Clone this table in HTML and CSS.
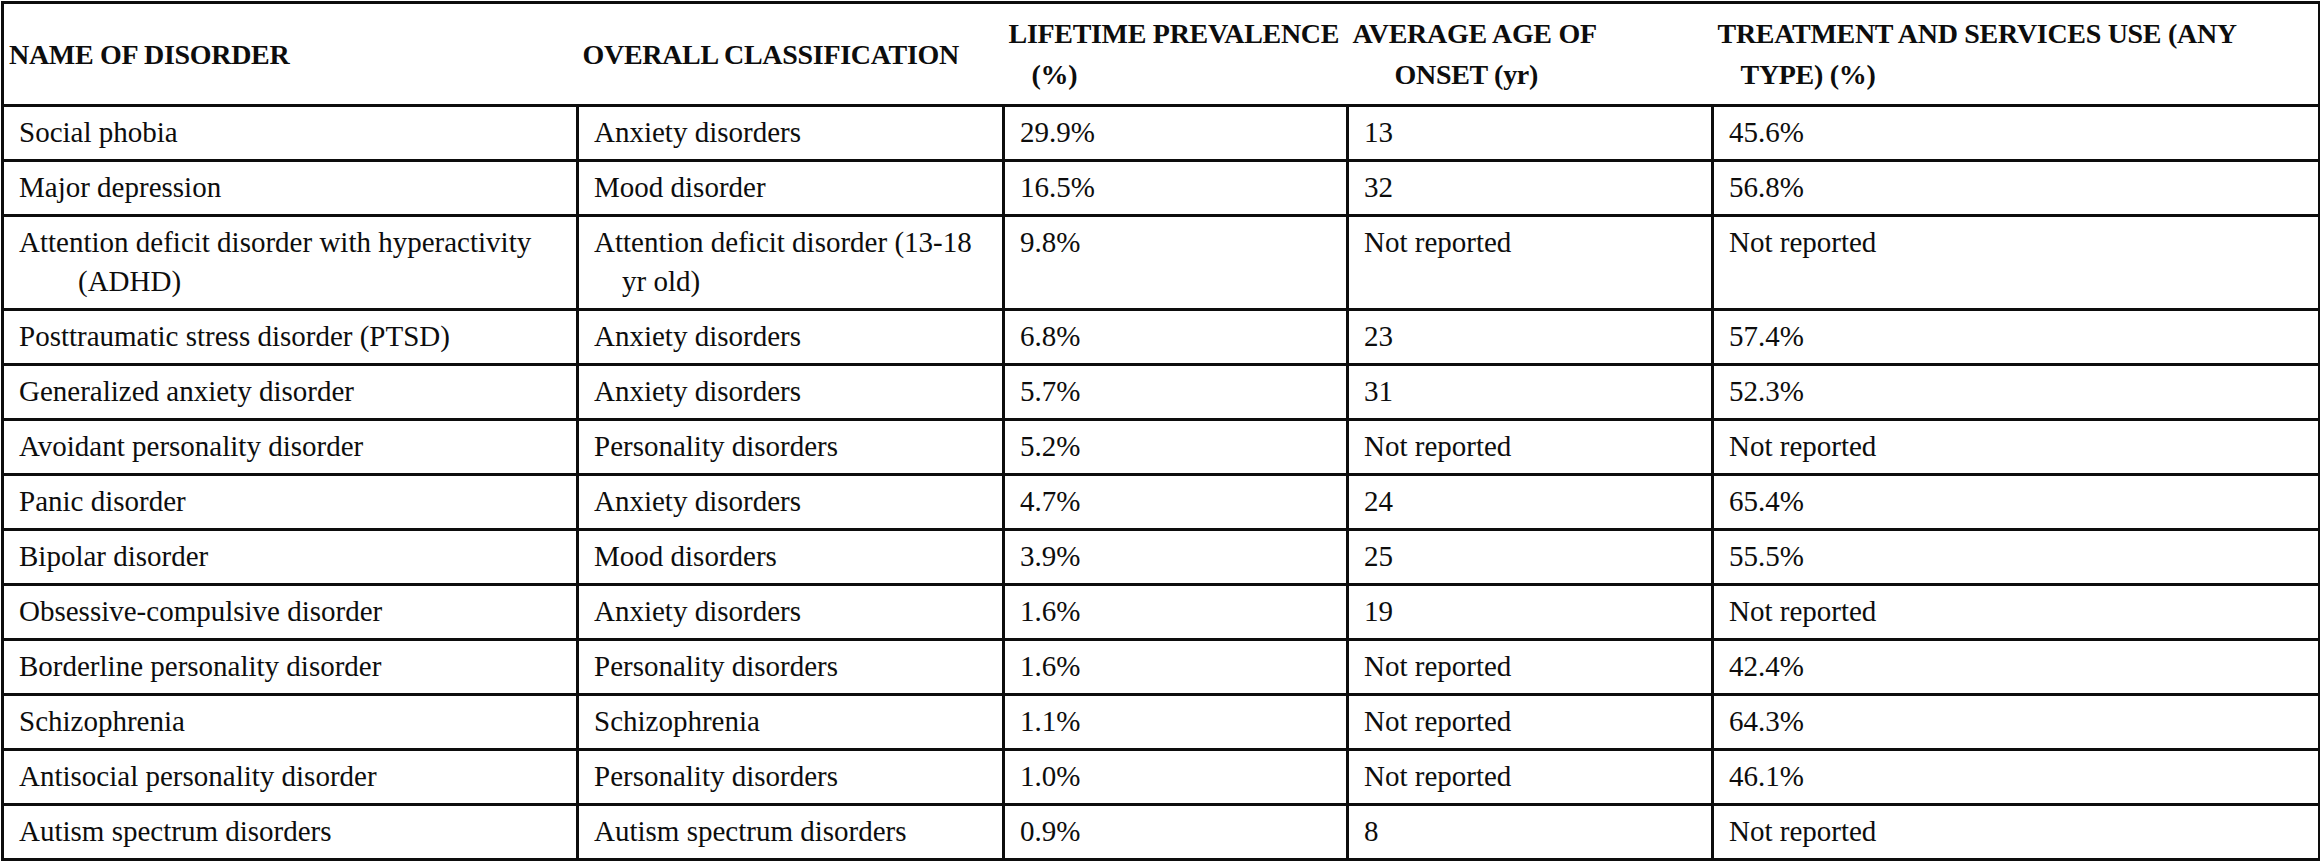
FILE: index.html
```html
<!DOCTYPE html>
<html lang="en">
<head>
<meta charset="utf-8">
<title>Disorders table</title>
<link rel="stylesheet" href="styles.css">
</head>
<body>
<table class="data">
  <colgroup>
    <col class="c1"><col class="c2"><col class="c3"><col class="c4"><col class="c5">
  </colgroup>
  <thead>
    <tr>
      <th><span class="l1">NAME OF DISORDER</span></th>
      <th><span class="l1">OVERALL CLASSIFICATION</span></th>
      <th><span class="l1">LIFETIME PREVALENCE</span><span class="l2">(%)</span></th>
      <th><span class="l1">AVERAGE AGE OF</span><span class="l2 l2-wide">ONSET (yr)</span></th>
      <th><span class="l1">TREATMENT AND SERVICES USE (ANY</span><span class="l2">TYPE) (%)</span></th>
    </tr>
  </thead>
  <tbody>
    <tr><td>Social phobia</td><td class="cls">Anxiety disorders</td><td>29.9%</td><td>13</td><td>45.6%</td></tr>
    <tr><td>Major depression</td><td class="cls">Mood disorder</td><td>16.5%</td><td>32</td><td>56.8%</td></tr>
    <tr><td>Attention deficit disorder with hyperactivity (ADHD)</td><td class="cls">Attention deficit disorder (13-18 yr old)</td><td>9.8%</td><td>Not reported</td><td>Not reported</td></tr>
    <tr><td>Posttraumatic stress disorder (PTSD)</td><td class="cls">Anxiety disorders</td><td>6.8%</td><td>23</td><td>57.4%</td></tr>
    <tr><td>Generalized anxiety disorder</td><td class="cls">Anxiety disorders</td><td>5.7%</td><td>31</td><td>52.3%</td></tr>
    <tr><td>Avoidant personality disorder</td><td class="cls">Personality disorders</td><td>5.2%</td><td>Not reported</td><td>Not reported</td></tr>
    <tr><td>Panic disorder</td><td class="cls">Anxiety disorders</td><td>4.7%</td><td>24</td><td>65.4%</td></tr>
    <tr><td>Bipolar disorder</td><td class="cls">Mood disorders</td><td>3.9%</td><td>25</td><td>55.5%</td></tr>
    <tr><td>Obsessive-compulsive disorder</td><td class="cls">Anxiety disorders</td><td>1.6%</td><td>19</td><td>Not reported</td></tr>
    <tr><td>Borderline personality disorder</td><td class="cls">Personality disorders</td><td>1.6%</td><td>Not reported</td><td>42.4%</td></tr>
    <tr><td>Schizophrenia</td><td class="cls">Schizophrenia</td><td>1.1%</td><td>Not reported</td><td>64.3%</td></tr>
    <tr><td>Antisocial personality disorder</td><td class="cls">Personality disorders</td><td>1.0%</td><td>Not reported</td><td>46.1%</td></tr>
    <tr><td>Autism spectrum disorders</td><td class="cls">Autism spectrum disorders</td><td>0.9%</td><td>8</td><td>Not reported</td></tr>
  </tbody>
</table>
</body>
</html>
```
FILE: styles.css
```css
html, body {
  margin: 0;
  padding: 0;
  background: #ffffff;
}

.data {
  border-collapse: collapse;
  table-layout: fixed;
  width: 2317px;
  margin: 1px 0 0 1px;
  font-family: "Liberation Serif", "Times New Roman", serif;
  color: #0d0d0d;
  border: 3px solid #0d0d0d;
}

.c1 { width: 575px; }
.c2 { width: 426px; }
.c3 { width: 344px; }
.c4 { width: 365px; }
.c5 { width: 607px; }

.data th {
  font-weight: bold;
  font-size: 28px;
  line-height: 41px;
  text-align: left;
  vertical-align: middle;
  white-space: nowrap;
  height: 82px;
  padding: 9px 0 9px 5px;
  letter-spacing: -0.3px;
  border-bottom: 3px solid #0d0d0d;
}

.data th .l1,
.data th .l2 {
  display: block;
}

.data th .l2 {
  padding-left: 23px;
}

.data th .l2-wide {
  padding-left: 42px;
}

.data td {
  font-size: 29px;
  line-height: 39px;
  vertical-align: top;
  padding: 6px 10px 7px 74px;
  text-indent: -59px;
  border: 3px solid #0d0d0d;
}

.data td.cls {
  padding-left: 43px;
  text-indent: -28px;
}
```
